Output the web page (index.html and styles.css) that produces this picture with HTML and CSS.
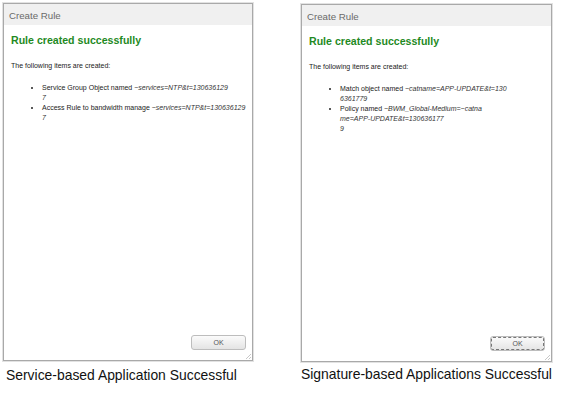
FILE: index.html
```html
<!DOCTYPE html>
<html>
<head>
<meta charset="utf-8">
<link rel="stylesheet" href="styles.css">
</head>
<body>
<div class="row">
  <div class="figure fig-left">
    <div class="dialog">
      <div class="hdr">Create Rule</div>
      <div class="content">
        <div class="title">Rule created successfully</div>
        <div class="intro">The following items are created:</div>
        <ul class="items">
          <li>Service Group Object named <i>~services=NTP&amp;t=130636129<br>7</i></li>
          <li>Access Rule to bandwidth manage <i>~services=NTP&amp;t=130636129<br>7</i></li>
        </ul>
      </div>
      <div class="footer"><button class="ok">OK</button></div>
      <svg class="grip" width="6" height="6" viewBox="0 0 6 6"><path d="M1 6L6 1M4 6L6 4" stroke="#c8c8c8" stroke-width="1"/></svg>
    </div>
    <div class="caption">Service-based Application Successful</div>
  </div>
  <div class="figure fig-right">
    <div class="dialog">
      <div class="hdr">Create Rule</div>
      <div class="content">
        <div class="title">Rule created successfully</div>
        <div class="intro">The following items are created:</div>
        <ul class="items">
          <li>Match object named <i>~catname=APP-UPDATE&amp;t=130<br>6361779</i></li>
          <li>Policy named <i>~BWM_Global-Medium=~catna<br>me=APP-UPDATE&amp;t=130636177<br>9</i></li>
        </ul>
      </div>
      <div class="footer"><button class="ok focused">OK</button></div>
      <svg class="grip" width="6" height="6" viewBox="0 0 6 6"><path d="M1 6L6 1M4 6L6 4" stroke="#c8c8c8" stroke-width="1"/></svg>
    </div>
    <div class="caption">Signature-based Applications Successful</div>
  </div>
</div>
</body>
</html>
```
FILE: styles.css
```css
html, body {
  margin: 0;
  padding: 0;
  background: #ffffff;
}
body {
  font-family: "Liberation Sans", Arial, sans-serif;
}
.row {
  display: flex;
  align-items: flex-start;
  padding: 3px 0 0 3px;
  gap: 48px;
}
.figure {
  display: flex;
  flex-direction: column;
}
.fig-left { width: 250px; }
.fig-right { width: 251px; margin-top: 1px; }
.dialog {
  position: relative;
  height: 358px;
  box-sizing: border-box;
  border: 1px solid #a9a9a9;
  box-shadow: 0 0 0 1px #e2e2e2;
  background: #fff;
  display: flex;
  flex-direction: column;
}
.hdr {
  height: 21px;
  line-height: 23px;
  background: #f0f0f0;
  color: #6a6a6a;
  font-size: 9.7px;
  padding-left: 5px;
}
.content {
  flex: 1;
  padding: 0 7px;
}
.title {
  margin-top: 8px;
  color: #1f8a1f;
  font-weight: bold;
  font-size: 10.6px;
  line-height: 14px;
}
.intro {
  margin-top: 14px;
  font-size: 7px;
  line-height: 10px;
  color: #222;
}
.items {
  margin: 12px 0 0 0;
  padding-left: 31px;
  font-size: 7px;
  line-height: 10px;
  color: #222;
  white-space: nowrap;
}
.items i {
  color: #333;
}
.footer {
  display: flex;
  justify-content: flex-end;
  padding: 0 6px 10px 0;
}
.ok {
  width: 55px;
  height: 15px;
  padding: 0;
  border: 1px solid #bdbdbd;
  border-radius: 3px;
  background: linear-gradient(#fbfbfb, #e4e4e4);
  font-family: "Liberation Sans", Arial, sans-serif;
  font-size: 7px;
  color: #555;
}
.ok.focused {
  outline: 1px dashed #777;
  outline-offset: -2px;
}
.grip {
  position: absolute;
  right: 1px;
  bottom: 1px;
}
.caption {
  margin-top: 6px;
  padding-left: 3px;
  font-size: 13.9px;
  line-height: 17px;
  color: #111;
  white-space: nowrap;
}
.fig-right .caption {
  padding-left: 0;
  margin-top: 4px;
}
```
